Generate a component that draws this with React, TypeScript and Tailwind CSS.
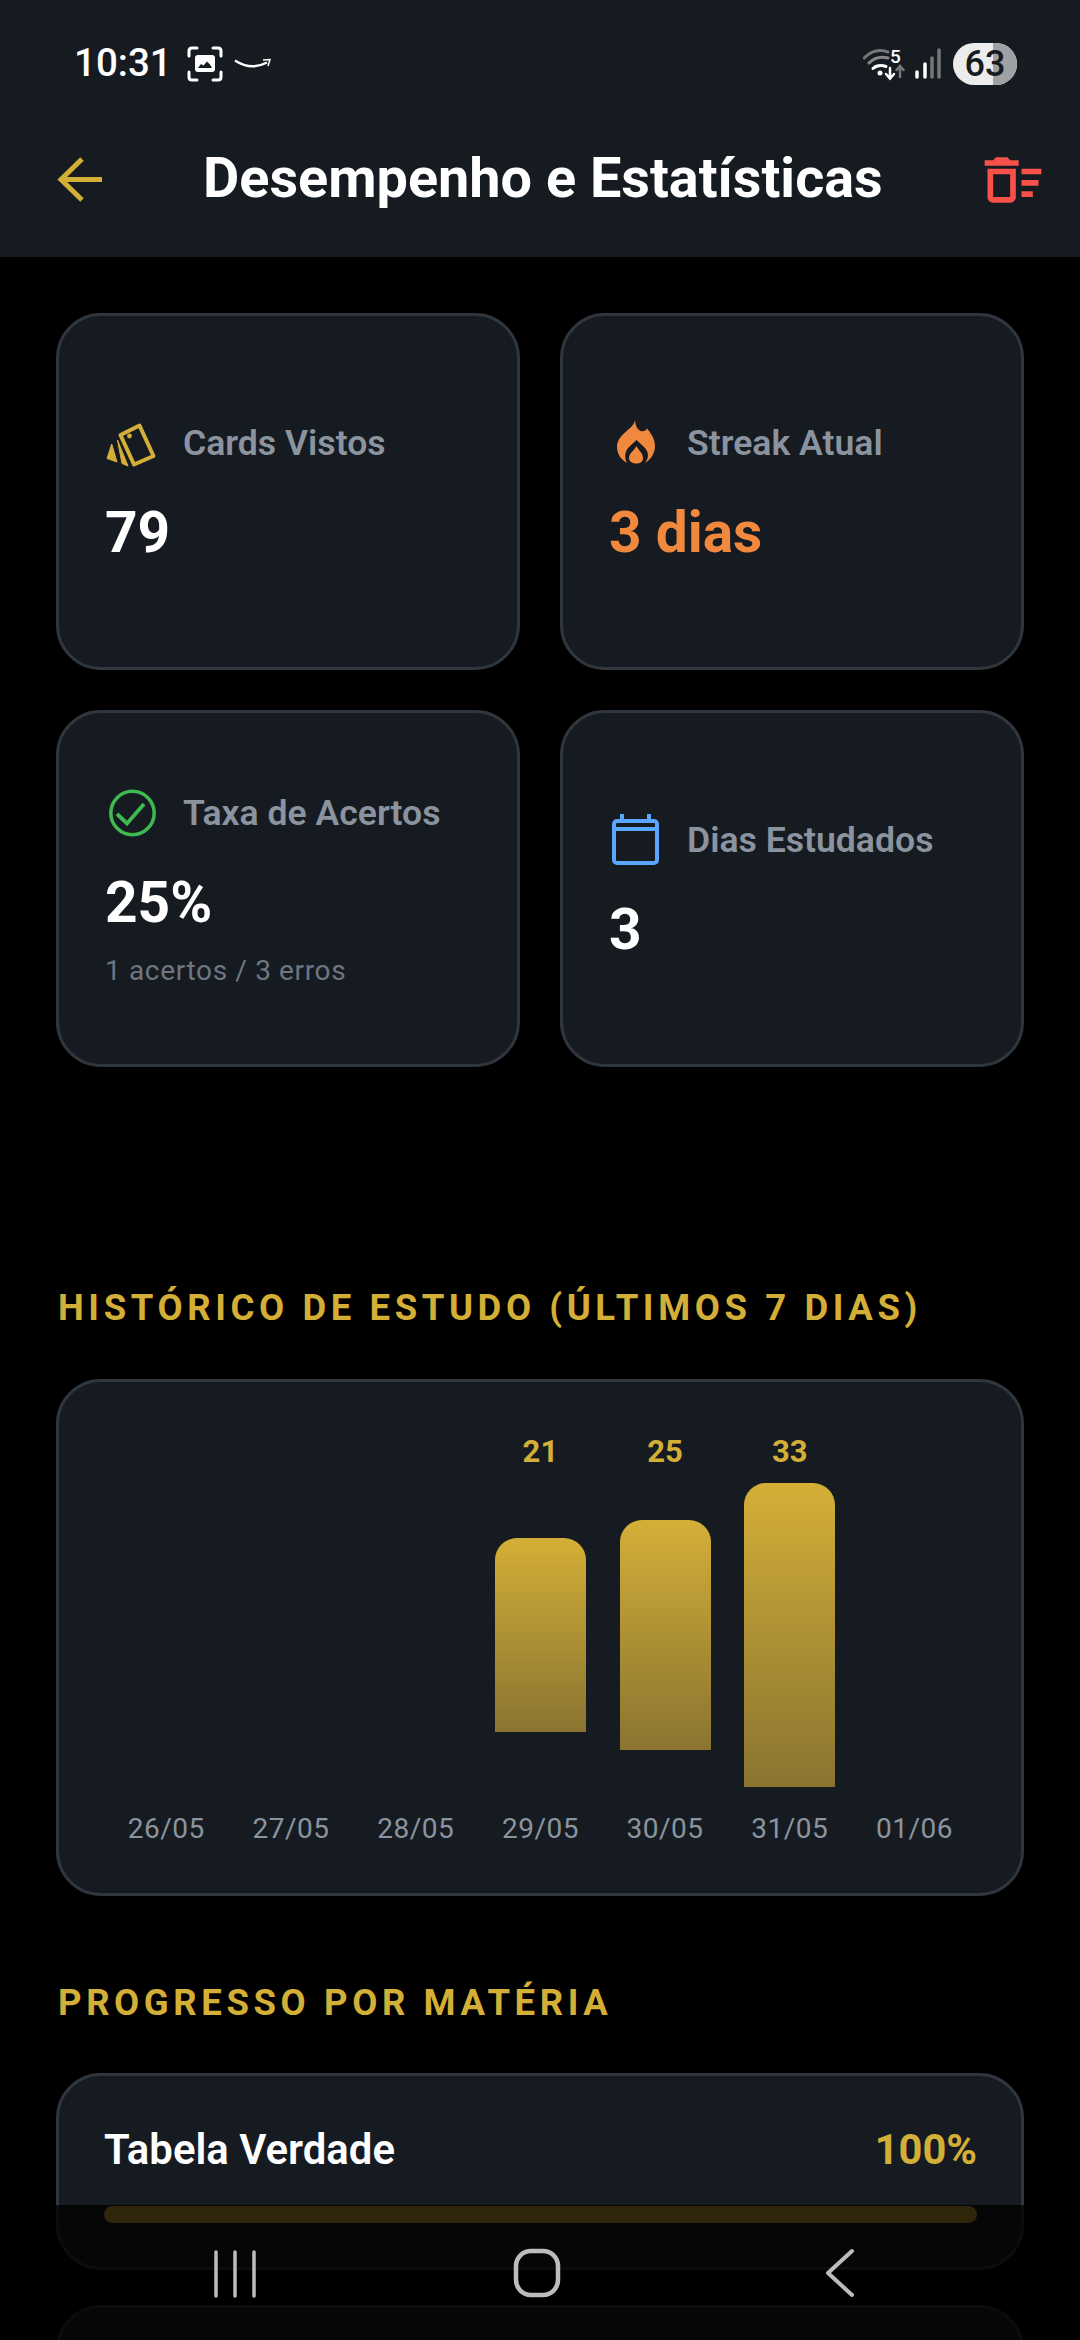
const GOLD = "#d4af37";

function Arrow() {
  return (
    <svg width="45" height="45" viewBox="0 0 45 45" fill="none" stroke={GOLD} strokeWidth="5">
      <path d="M45 22.5H4" />
      <path d="M25 2L4 22.5L25 43" />
    </svg>
  );
}

function SweepIcon() {
  return (
    <svg width="68" height="68" viewBox="0 0 24 24" fill="#f85149">
      <path d="M15 16h4v2h-4zm0-8h7v2h-7zm0 4h6v2h-6zM3 18c0 1.1.9 2 2 2h6c1.1 0 2-.9 2-2V8H3v10zm2-8h6v8H5v-8zm5-6H6L5 5H2v2h12V5h-3z" />
    </svg>
  );
}

function CardsIcon() {
  return (
    <svg width="56" height="56" viewBox="0 0 56 56" fill="none">
      <path d="M15.500 20L34.500 10.500L48.500 41L29 49.500Z" stroke={GOLD} strokeWidth="4" strokeLinejoin="round" />
      <circle cx="24.500" cy="21" r="2.400" fill={GOLD} />
      <path d="M6.700 29L12 47L2 43.500Z" fill={GOLD} stroke={GOLD} strokeWidth="1" strokeLinejoin="round" />
      <path d="M12.500 25L23 51L17 48.500Z" fill={GOLD} stroke={GOLD} strokeWidth="1" strokeLinejoin="round" />
    </svg>
  );
}

function FlameIcon() {
  return (
    <svg width="56" height="56" viewBox="0 0 56 56" fill="#f0883e">
      <path d="M26 5C25 14 8 19 8 32C8 40 13 45 18 48C15 42 16 36 20 32L27.500 25L35 32C39 36 41 42 36 48C41 45 46 39 46 31C46 24 42 18 38 13.500C37 16 33 17.500 30 15C27.500 13 26.500 10 26 5Z" />
      <path d="M27.500 31C30 36 34 38 34 43C34 47 31 48.500 27.500 48.500C24 48.500 20 47 20 43C20 38 25 36 27.500 31Z" />
    </svg>
  );
}

function CheckIcon() {
  return (
    <svg width="56" height="56" viewBox="0 0 56 56" fill="none" stroke="#3fb950" strokeWidth="3.500">
      <circle cx="27.500" cy="28" r="21.700" />
      <path d="M12 29L22 38.500L39 19" strokeWidth="3.800" />
    </svg>
  );
}

function CalendarIcon() {
  return (
    <svg width="56" height="56" viewBox="0 0 56 56" fill="none" stroke="#58a6ff" strokeWidth="4">
      <rect x="5" y="9" width="43" height="42" rx="3" />
      <path d="M5 17H48" />
      <path d="M13 2V9M40 2V9" />
    </svg>
  );
}

function StatCard({
  icon,
  label,
  value,
  valueClass,
  sub,
}: {
  icon: React.ReactNode;
  label: string;
  value: string;
  valueClass?: string;
  sub?: string;
}) {
  return (
    <div className="flex h-[357px] flex-col justify-center rounded-[45px] border-[3px] border-[#30363d] bg-[#161b22] pb-[3px] pl-[46px] pr-[40px]">
      <div className="flex h-[56px] items-center">
        <div className="w-[56px] shrink-0">{icon}</div>
        <span className="ml-[22px] text-[35.6px] font-semibold leading-[40px] text-[#8b949e]">{label}</span>
      </div>
      <div className={`mt-[29px] text-[56.8px] font-bold leading-[66px] ${valueClass ?? "text-white"}`}>{value}</div>
      {sub && <div className="mt-[17px] text-[28px] leading-[36px] tracking-[0.65px] text-[#6e7681]">{sub}</div>}
    </div>
  );
}

const bars = [
  { date: "26/05", count: "", h: 0 },
  { date: "27/05", count: "", h: 0 },
  { date: "28/05", count: "", h: 0 },
  { date: "29/05", count: "21", h: 194 },
  { date: "30/05", count: "25", h: 230 },
  { date: "31/05", count: "33", h: 304 },
  { date: "01/06", count: "", h: 0 },
];

function ChartCol({ date, count, h }: { date: string; count: string; h: number }) {
  return (
    <div className="flex w-[124.7px] flex-col items-center">
      <div className="h-[40px] text-[31px] font-bold leading-[40px] text-[#d4af37]">{count}</div>
      <div className="flex h-[326px] items-center">
        {h > 0 && (
          <div
            className="w-[91px] rounded-t-[22px] bg-gradient-to-b from-[#d4af37] to-[#8a7430]"
            style={{ height: h }}
          />
        )}
      </div>
      <div className="mt-[13px] text-[28px] leading-[36px] tracking-[0.5px] text-[#8b949e]">{date}</div>
    </div>
  );
}

function NavBar() {
  return (
    <div className="absolute inset-x-0 bottom-0 h-[135px] bg-black/[0.78]">
      <svg width="1080" height="135" viewBox="0 0 1080 135" fill="none" stroke="#bdbdbd" strokeLinecap="round">
        <path d="M216 47V91M235 47V91M254 47V91" strokeWidth="3.500" />
        <rect x="516" y="46" width="42" height="44" rx="15" strokeWidth="4.500" />
        <path d="M852 46L828 68L852 90" strokeWidth="4" strokeLinejoin="round" />
      </svg>
    </div>
  );
}

function StatusIcons() {
  return (
    <svg width="82" height="40" viewBox="0 0 82 40" fill="none" strokeLinecap="round">
      <path d="M1 14Q12 3 25 8" stroke="#777" strokeWidth="3" />
      <path d="M6 19Q14 11 25 14" stroke="#888" strokeWidth="3" />
      <path d="M10 24.500Q15 20 23 22.500" stroke="#fff" strokeWidth="3" />
      <circle cx="17" cy="29" r="2.500" fill="#fff" />
      <text x="27" y="18.500" fill="#fff" fontSize="19" fontWeight="500" fontFamily="Roboto, sans-serif">5</text>
      <path d="M27 24V34M23 30L27 34.500L31 30" stroke="#fff" strokeWidth="2.500" />
      <path d="M37 33V22M33.500 26L37 22L40.500 26" stroke="#777" strokeWidth="2.500" />
      <path d="M54 33V28M62 33V20" stroke="#fff" strokeWidth="3.500" />
      <path d="M69 33V14M76 33V6" stroke="#777" strokeWidth="3.500" />
    </svg>
  );
}

export default function App() {
  return (
    <div className="relative h-[2340px] w-[1080px] overflow-hidden bg-black font-['Roboto',sans-serif] text-white">
      <header className="relative h-[257px] bg-[#161b22]">
        <div className="flex h-[119px] items-center justify-between pl-[74px] pr-[63px] pt-[8px]">
          <div className="flex items-center">
            <span className="text-[38.5px] font-medium leading-none text-white">10:31</span>
            <svg className="ml-[15px]" width="36" height="36" viewBox="0 0 36 36" fill="none">
              <path d="M2 10V5Q2 2 5 2H10M26 2H31Q34 2 34 5V10M34 26V31Q34 34 31 34H26M10 34H5Q2 34 2 31V26" stroke="#fff" strokeWidth="3" strokeLinecap="round" />
              <rect x="8" y="9" width="20" height="17" rx="3" fill="#fff" />
              <path d="M11 22L14 18L16.500 19.500L20 15.500L23 18.500L25 22Z" fill="#161b22" />
            </svg>
            <svg className="ml-[11px]" width="38" height="12" viewBox="0 0 38 12" fill="none" stroke="#fff">
              <path d="M1 2.500Q17 13 33 4.500" strokeWidth="2.400" />
              <path d="M29 2L36 1.500L34 8" strokeWidth="1.500" />
            </svg>
          </div>
          <div className="flex items-center">
            <StatusIcons />
            <div className="relative ml-[8px] h-[42px] w-[64px] overflow-hidden rounded-full bg-[#ececec]">
              <div className="absolute inset-y-0 right-0 w-[24px] bg-[#a0a1a4]" />
              <span className="absolute inset-0 text-center text-[36px] font-medium leading-[42px] text-[#161b22]">63</span>
            </div>
          </div>
        </div>
        <div className="relative flex h-[120px] items-center pl-[57px]">
          <Arrow />
          <h1 className="ml-[101px] text-[55.8px] font-bold leading-none text-white">Desempenho e Estatísticas</h1>
          <div className="absolute left-[979px] top-[27px]">
            <SweepIcon />
          </div>
        </div>
      </header>

      <main className="px-[56px] pt-[56px]">
        <div className="grid grid-cols-2 gap-x-[40px] gap-y-[40px]">
          <StatCard icon={<CardsIcon />} label="Cards Vistos" value="79" />
          <StatCard icon={<FlameIcon />} label="Streak Atual" value="3 dias" valueClass="text-[#f0883e]" />
          <StatCard icon={<CheckIcon />} label="Taxa de Acertos" value="25%" sub="1 acertos / 3 erros" />
          <StatCard icon={<CalendarIcon />} label="Dias Estudados" value="3" />
        </div>

        <h2 className="mt-[219px] pl-[2px] text-[36.5px] font-bold leading-[44px] tracking-[4.6px] text-[#d4af37]">
          HISTÓRICO DE ESTUDO (ÚLTIMOS 7 DIAS)
        </h2>

        <div className="mt-[49px] flex h-[517px] rounded-[45px] border-[3px] border-[#30363d] bg-[#161b22] pl-[45px] pt-[50px]">
          {bars.map((b) => (
            <ChartCol key={b.date} {...b} />
          ))}
        </div>

        <h2 className="mt-[85px] pl-[2px] text-[36.5px] font-bold leading-[44px] tracking-[4.6px] text-[#d4af37]">
          PROGRESSO POR MATÉRIA
        </h2>

        <div className="mt-[48px] h-[197px] rounded-[45px] border-[3px] border-[#30363d] bg-[#161b22] pl-[45px] pr-[44px] pt-[49px]">
          <div className="flex items-center justify-between">
            <span className="text-[41.9px] font-semibold leading-[50px] text-white">Tabela Verdade</span>
            <span className="text-[41.6px] font-bold leading-[50px] text-[#d4af37]">100%</span>
          </div>
          <div className="mt-[31px] h-[17px] rounded-full bg-[#d4af37]" />
        </div>

        <div className="mt-[35px] h-[197px] rounded-[45px] border-[3px] border-[#30363d] bg-[#161b22]" />
      </main>

      <NavBar />
    </div>
  );
}
